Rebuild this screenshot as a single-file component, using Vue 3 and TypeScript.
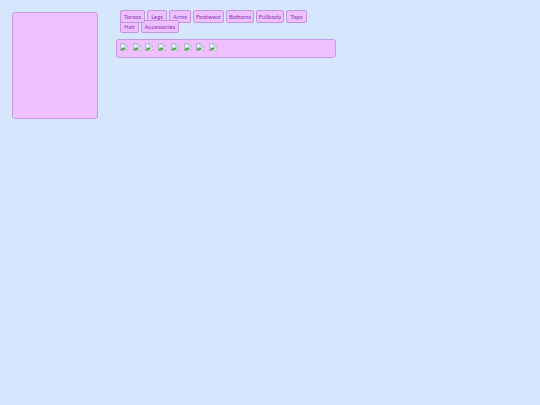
<script setup lang="ts">
import { ref } from 'vue'

const firstRow: string[] = ['Torsos', 'Legs', 'Arms', 'Footwear', 'Bottoms', 'Fullbody', 'Tops']
const secondRow: string[] = ['Hair', 'Accessories']
const items: number[] = [1, 2, 3, 4, 5, 6, 7, 8]
const active = ref('Torsos')
</script>

<template>
  <main class="page">
    <section class="preview"></section>
    <section class="wardrobe">
      <nav class="tabs">
        <div class="row front">
          <button
            v-for="tab in firstRow"
            :key="tab"
            type="button"
            :class="{ active: tab === active }"
            @click="active = tab"
          >{{ tab }}</button>
        </div>
        <div class="row back">
          <button
            v-for="tab in secondRow"
            :key="tab"
            type="button"
            :class="{ active: tab === active }"
            @click="active = tab"
          >{{ tab }}</button>
        </div>
      </nav>
      <div class="items">
        <svg v-for="item in items" :key="item" viewBox="0 0 16 16" aria-hidden="true">
          <path d="M1 1h9l5 5v5l-5 4H1z" fill="#cbdcf4" />
          <path d="M3 7a2 2 0 0 1 4-1 2 2 0 0 1 2 2H3z" fill="#fff" />
          <path d="M1 14v-2l5-3 6 1-4 5H1z" fill="#5fa656" />
          <path d="M10 1v5h5" fill="#fff" />
          <path d="M6 15H1V1h9l5 5v3M10 1v5h5M15 12v3h-5" fill="none" stroke="#a8abb4" stroke-width="1.3" />
          <path d="M8 15l7-5v1l-5 4z" fill="#fff" />
        </svg>
      </div>
    </section>
  </main>
</template>

<style>
body {
  background: #d6e6fc;
}
</style>

<style scoped>
.page {
  display: flex;
  align-items: flex-start;
  gap: 18px;
  padding: 10px 12px;
  font-family: Lato, "Liberation Sans", sans-serif;
}

.preview {
  box-sizing: border-box;
  flex: none;
  width: 86px;
  height: 107px;
  margin-top: 2px;
  border: 1px solid #c49de0;
  border-radius: 3px;
  background: #eec0ff;
}

.wardrobe {
  width: 43%;
  max-width: 220px;
}

.tabs {
  padding-left: 4px;
}

.row {
  display: grid;
  gap: 2px;
}

.row.front {
  grid-template-columns: 25px 20px 22px 31px 28px 28px 21px;
}

.row.back {
  grid-template-columns: 19px 38px;
  margin-top: -3px;
}

button {
  box-sizing: border-box;
  height: 13px;
  padding: 0;
  border: 1px solid #c494e0;
  border-radius: 2px;
  background: #eec0ff;
  color: #8c35b4;
  font-family: inherit;
  font-size: 6px;
  line-height: 11px;
  white-space: nowrap;
}

button.active {
  position: relative;
  z-index: 1;
}

.items {
  box-sizing: border-box;
  display: grid;
  grid-template-columns: repeat(8, 8px);
  justify-content: space-between;
  height: 19px;
  margin-top: 6px;
  padding: 3px 118px 3px 3px;
  border: 1px solid #c49de0;
  border-radius: 3px;
  background: #eec0ff;
}

.items svg {
  width: 8px;
  height: 8px;
}
</style>
